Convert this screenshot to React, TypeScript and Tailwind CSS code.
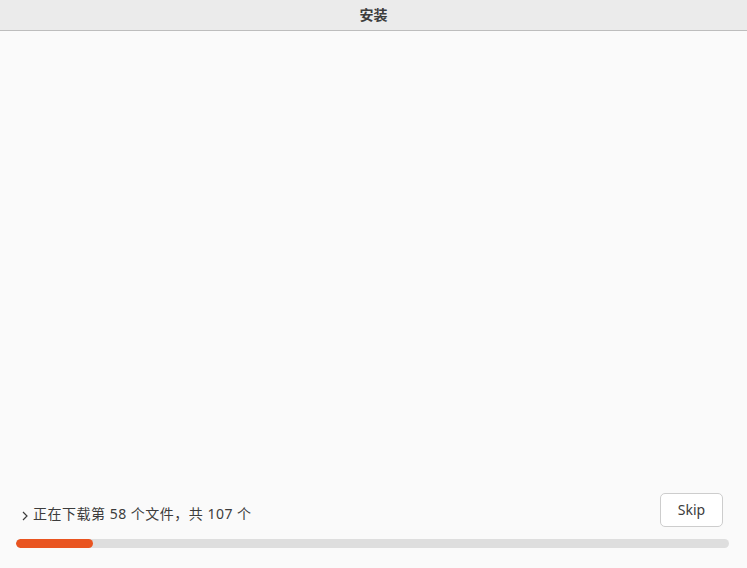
import React from "react";

const font = '"Noto Sans", "Noto Sans CJK SC", sans-serif';

export default function App() {
  return (
    <div
      className="w-[747px] h-[568px] flex flex-col bg-[#fafafa] text-[#3c3c3c]"
      style={{ fontFamily: font }}
    >
      <div className="h-[31px] shrink-0 border-b border-[#bdbdbd] bg-[#ebebeb] flex items-center justify-center">
        <span className="text-[14px] font-bold text-[#3d3d3d] leading-none">安装</span>
      </div>
      <div className="flex-1" />
      <div className="pl-[16px] pr-[18px] pb-[20px]">
        <div className="flex items-end justify-between pl-[6px] pr-[6px]">
          <div className="flex items-center pb-[3px] leading-[20px] text-[14px]">
            <svg width="6" height="10" viewBox="0 0 6 10" className="mr-[5px] mt-[4px]">
              <path d="M1 1 L5 5 L1 9" fill="none" stroke="#3c3c3c" strokeWidth="1.2" />
            </svg>
            <span className="tracking-[0.5px]">正在下载第 58 个文件，共 107 个</span>
          </div>
          <button className="w-[63px] h-[34px] rounded-[5px] border border-[#cdcdcd] bg-white text-[14px] text-[#3c3c3c] pb-[2px]">
            Skip
          </button>
        </div>
        <div className="mt-[12px] h-[9px] rounded-full bg-[#dedede] overflow-hidden">
          <div className="h-full w-[77px] rounded-full bg-[#e95420]" />
        </div>
      </div>
    </div>
  );
}
